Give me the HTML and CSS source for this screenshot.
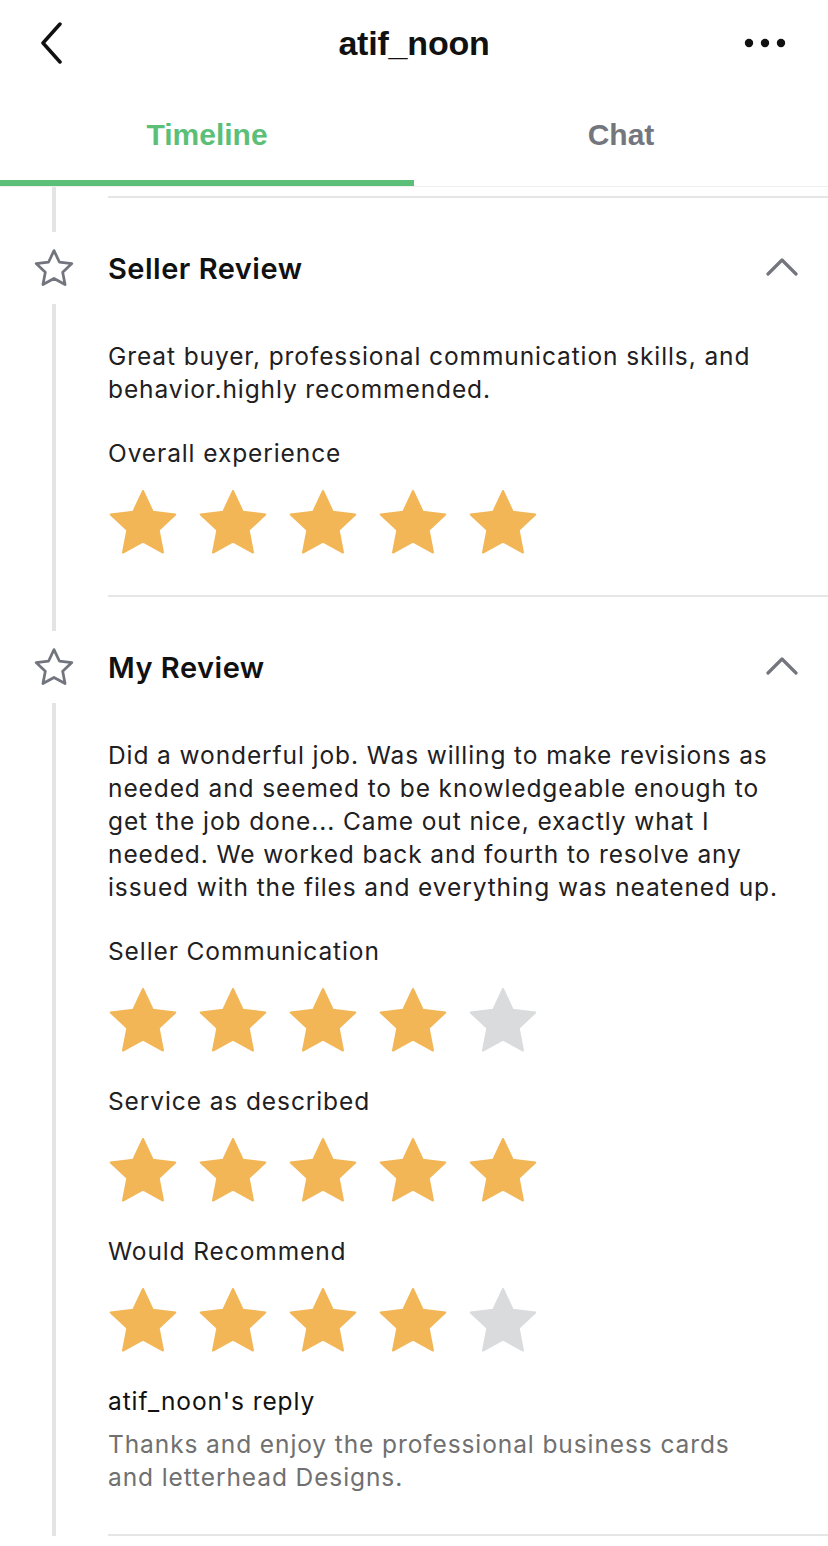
FILE: index.html
```html
<!DOCTYPE html>
<html>
<head>
<meta charset="utf-8">
<link rel="stylesheet" href="styles.css">
</head>
<body>
<svg class="defs" width="0" height="0" aria-hidden="true">
  <defs>
    <polygon id="starshape" points="35,1 44.7,21.7 67.3,24.5 50.7,40.1 55,62.5 35,51.5 15,62.5 19.3,40.1 2.7,24.5 25.3,21.7"/>
  </defs>
</svg>
<div class="screen">
  <header class="topbar">
    <div class="topbar-left">
      <svg class="back" width="30" height="42" viewBox="0 0 30 42"><polyline points="22,2 5,21 22,40" fill="none" stroke="#111" stroke-width="3.5" stroke-linecap="round" stroke-linejoin="round"/></svg>
    </div>
    <h1 class="title">atif_noon</h1>
    <div class="topbar-right">
      <svg class="more" width="44" height="10" viewBox="0 0 44 10"><circle cx="5" cy="5" r="4.2" fill="#111"/><circle cx="21" cy="5" r="4.2" fill="#111"/><circle cx="37" cy="5" r="4.2" fill="#111"/></svg>
    </div>
  </header>

  <nav class="tabs">
    <div class="tab active"><span class="tab-label">Timeline</span><span class="tab-bar"></span></div>
    <div class="tab"><span class="tab-label">Chat</span><span class="tab-bar"></span></div>
  </nav>

  <div class="timeline">
    <div class="item stub">
      <div class="rail"><span class="seg grow"></span></div>
      <div class="content"></div>
    </div>

    <section class="item">
      <div class="rail">
        <span class="seg top"></span>
        <span class="rail-icon"><svg width="42" height="40" viewBox="-3 -3 76 71"><use href="#starshape" fill="none" stroke="#72757d" stroke-width="5" stroke-linejoin="round"/></svg></span>
        <span class="seg grow"></span>
      </div>
      <div class="content">
        <div class="item-head">
          <h2 class="item-title">Seller Review</h2>
          <svg class="chev" width="32" height="18" viewBox="0 0 32 18"><polyline points="2,16 16,2 30,16" fill="none" stroke="#74767e" stroke-width="3.2" stroke-linecap="round" stroke-linejoin="round"/></svg>
        </div>
        <p class="text">Great buyer, professional communication skills, and behavior.highly recommended.</p>
        <div class="label">Overall experience</div>
        <div class="stars">
          <svg class="star on" viewBox="0 0 70 65"><use href="#starshape"/></svg>
          <svg class="star on" viewBox="0 0 70 65"><use href="#starshape"/></svg>
          <svg class="star on" viewBox="0 0 70 65"><use href="#starshape"/></svg>
          <svg class="star on" viewBox="0 0 70 65"><use href="#starshape"/></svg>
          <svg class="star on" viewBox="0 0 70 65"><use href="#starshape"/></svg>
        </div>
      </div>
    </section>

    <section class="item">
      <div class="rail">
        <span class="seg top"></span>
        <span class="rail-icon"><svg width="42" height="40" viewBox="-3 -3 76 71"><use href="#starshape" fill="none" stroke="#72757d" stroke-width="5" stroke-linejoin="round"/></svg></span>
        <span class="seg grow"></span>
      </div>
      <div class="content">
        <div class="item-head">
          <h2 class="item-title">My Review</h2>
          <svg class="chev" width="32" height="18" viewBox="0 0 32 18"><polyline points="2,16 16,2 30,16" fill="none" stroke="#74767e" stroke-width="3.2" stroke-linecap="round" stroke-linejoin="round"/></svg>
        </div>
        <p class="text">Did a wonderful job. Was willing to make revisions as needed and seemed to be knowledgeable enough to get the job done... Came out nice, exactly what I needed. We worked back and fourth to resolve any issued with the files and everything was neatened up.</p>
        <div class="label">Seller Communication</div>
        <div class="stars">
          <svg class="star on" viewBox="0 0 70 65"><use href="#starshape"/></svg>
          <svg class="star on" viewBox="0 0 70 65"><use href="#starshape"/></svg>
          <svg class="star on" viewBox="0 0 70 65"><use href="#starshape"/></svg>
          <svg class="star on" viewBox="0 0 70 65"><use href="#starshape"/></svg>
          <svg class="star off" viewBox="0 0 70 65"><use href="#starshape"/></svg>
        </div>
        <div class="label">Service as described</div>
        <div class="stars">
          <svg class="star on" viewBox="0 0 70 65"><use href="#starshape"/></svg>
          <svg class="star on" viewBox="0 0 70 65"><use href="#starshape"/></svg>
          <svg class="star on" viewBox="0 0 70 65"><use href="#starshape"/></svg>
          <svg class="star on" viewBox="0 0 70 65"><use href="#starshape"/></svg>
          <svg class="star on" viewBox="0 0 70 65"><use href="#starshape"/></svg>
        </div>
        <div class="label">Would Recommend</div>
        <div class="stars">
          <svg class="star on" viewBox="0 0 70 65"><use href="#starshape"/></svg>
          <svg class="star on" viewBox="0 0 70 65"><use href="#starshape"/></svg>
          <svg class="star on" viewBox="0 0 70 65"><use href="#starshape"/></svg>
          <svg class="star on" viewBox="0 0 70 65"><use href="#starshape"/></svg>
          <svg class="star off" viewBox="0 0 70 65"><use href="#starshape"/></svg>
        </div>
        <div class="reply-label">atif_noon's reply</div>
        <p class="reply">Thanks and enjoy the professional business cards and letterhead Designs.</p>
      </div>
    </section>
  </div>
</div>
</body>
</html>
```

FILE: styles.css
```css
* { box-sizing: border-box; }
html, body { margin: 0; padding: 0; background: #fff; }
body { font-family: "Inter", "Liberation Sans", sans-serif; color: #1f2022; }
.defs { position: absolute; width: 0; height: 0; overflow: hidden; }
.screen { width: 828px; min-height: 1546px; overflow: hidden; }

.topbar {
  height: 86px;
  display: grid;
  grid-template-columns: 1fr auto 1fr;
  align-items: center;
}
.topbar-left { display: flex; align-items: center; padding-left: 38px; }
.back { display: block; }
.title {
  margin: 0;
  font-family: "Liberation Sans", Arial, sans-serif;
  font-weight: 700;
  font-size: 34px;
  color: #111;
  letter-spacing: -0.2px;
}
.topbar-right { display: flex; justify-content: flex-end; padding-right: 40px; }
.more { display: block; }

.tabs {
  display: flex;
  height: 101px;
  border-bottom: 1px solid #efefef;
}
.tab {
  flex: 1;
  display: flex;
  flex-direction: column;
}
.tab-label {
  flex: 1;
  display: flex;
  align-items: center;
  justify-content: center;
  padding-top: 4px;
  font-family: "Liberation Sans", Arial, sans-serif;
  font-weight: 700;
  font-size: 30px;
  color: #74767e;
}
.tab-bar { height: 6px; background: transparent; }
.tab.active .tab-label { color: #5bbf78; }
.tab.active .tab-bar { background: #5bbf78; }

.item {
  display: grid;
  grid-template-columns: 108px 1fr;
}
.rail {
  display: flex;
  flex-direction: column;
  align-items: center;
}
.seg { width: 4px; background: #e4e4e4; margin-left: -1px; }
.seg.top { height: 34px; flex: none; }
.seg.grow { flex: 1; }
.rail-icon {
  height: 72px;
  display: flex;
  align-items: center;
  justify-content: center;
}
.rail-icon svg { display: block; }

.stub { height: 11px; }
.content { border-bottom: 2px solid #e6e6e6; }
.item .content { padding-bottom: 40px; }
.stub .content { padding-bottom: 0; }

.item-head {
  margin-top: 34px;
  height: 72px;
  display: flex;
  align-items: center;
  justify-content: space-between;
  padding-right: 30px;
}
.item-title {
  margin: 0;
  font-size: 29px;
  font-weight: 600;
  letter-spacing: 0.5px;
  color: #111;
}
.chev { display: block; margin-top: -3px; }

.text, .label, .reply-label, .reply {
  font-size: 24.5px;
  line-height: 33px;
  letter-spacing: 0.9px;
}
.text {
  margin: 36px 30px 0 0;
}
.label {
  margin-top: 31px;
}
.stars {
  display: flex;
  gap: 20px;
  margin-top: 20px;
}
.star { width: 70px; height: 65px; display: block; }
.star.on { fill: #f2b657; stroke: #f2b657; stroke-width: 2; stroke-linejoin: round; }
.star.off { fill: #dadbdd; stroke: #dadbdd; stroke-width: 2; stroke-linejoin: round; }
.stars + .label { margin-top: 32px; }
.reply-label {
  margin-top: 32px;
  color: #111;
}
.reply {
  margin: 10px 0 0 0;
  max-width: 640px;
  color: #707070;
}
```
